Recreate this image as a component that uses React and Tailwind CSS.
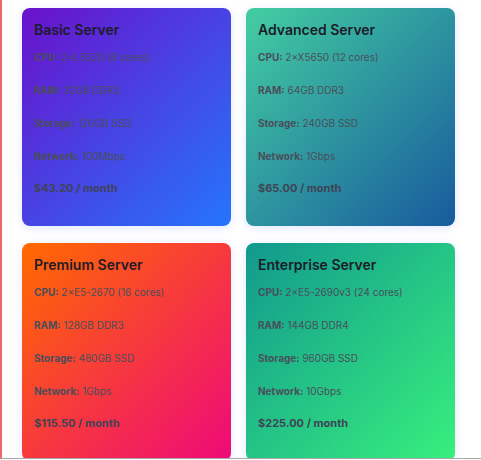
import React from "react";

const servers = [
  {
    name: "Basic Server",
    cpu: "2×L5520 (8 cores)",
    ram: "32GB DDR3",
    storage: "120GB SSD",
    network: "100Mbps",
    price: "$43.20 / month",
    bg: "bg-[linear-gradient(to_bottom_right,#6a11cb,#2575fc)]",
  },
  {
    name: "Advanced Server",
    cpu: "2×X5650 (12 cores)",
    ram: "64GB DDR3",
    storage: "240GB SSD",
    network: "1Gbps",
    price: "$65.00 / month",
    bg: "bg-[linear-gradient(to_bottom_right,#43cea2,#185a9d)]",
  },
  {
    name: "Premium Server",
    cpu: "2×E5-2670 (16 cores)",
    ram: "128GB DDR3",
    storage: "480GB SSD",
    network: "1Gbps",
    price: "$115.50 / month",
    bg: "bg-[linear-gradient(to_bottom_right,#ff6a00,#ee0979)]",
  },
  {
    name: "Enterprise Server",
    cpu: "2×E5-2690v3 (24 cores)",
    ram: "144GB DDR4",
    storage: "960GB SSD",
    network: "10Gbps",
    price: "$225.00 / month",
    bg: "bg-[linear-gradient(to_bottom_right,#11998e,#38ef7d)]",
  },
];

function Spec({ label, value }) {
  return (
    <p className="h-4 text-[10px] leading-4 text-[#4a4e5a]">
      <span className="font-bold">{label}:</span> {value}
    </p>
  );
}

function ServerCard({ server }) {
  return (
    <div
      className={`flex h-[218px] w-[209px] flex-col rounded-lg px-3 pt-3 shadow-[0_2px_10px_rgba(90,120,255,0.18)] ${server.bg}`}
    >
      <h2 className="text-[14px] font-semibold leading-5 text-[#1c1c28]">
        {server.name}
      </h2>
      <div className="mt-[9px] flex flex-col gap-[17px]">
        <Spec label="CPU" value={server.cpu} />
        <Spec label="RAM" value={server.ram} />
        <Spec label="Storage" value={server.storage} />
        <Spec label="Network" value={server.network} />
      </div>
      <p className="mt-[15px] text-[11px] font-bold leading-[18px] text-[#3f4354]">
        {server.price}
      </p>
    </div>
  );
}

export default function App() {
  return (
    <div
      className="h-[460px] w-[481px] overflow-hidden bg-white"
      style={{ fontFamily: "Inter, 'Noto Sans', sans-serif" }}
    >
      <div className="h-[459px] overflow-hidden border-b border-l-2 border-b-[#a8a8a8] border-l-[#e86a6a] bg-white">
        <div className="grid grid-cols-[209px_209px] gap-x-[15px] gap-y-[17px] pl-5 pt-2">
          {servers.map((s) => (
            <ServerCard key={s.name} server={s} />
          ))}
        </div>
      </div>
    </div>
  );
}
